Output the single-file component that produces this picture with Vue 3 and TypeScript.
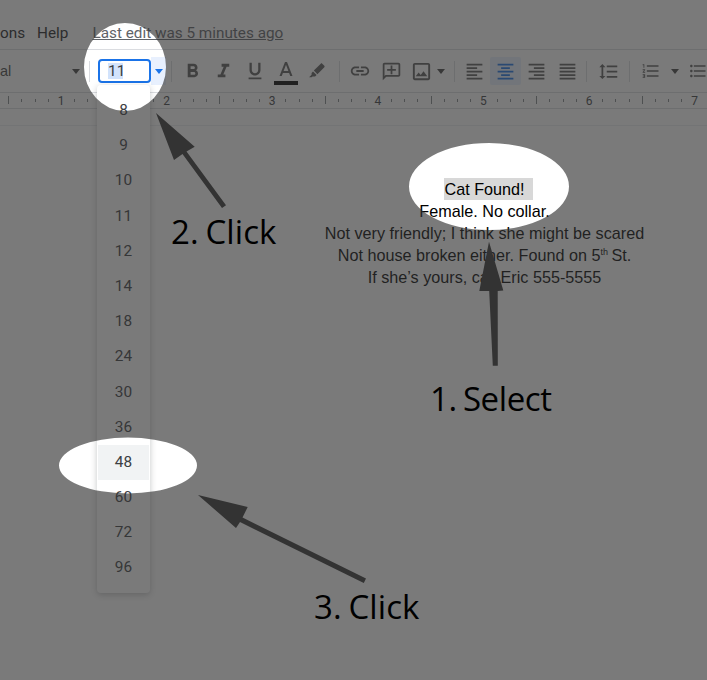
<script setup lang="ts">
import { computed } from 'vue'

interface Tool {
  d: string
  size: number
  width: number
  active?: boolean
  bar?: boolean
}

const ICONS = {
  bold: 'M15.6 10.79c.97-.67 1.65-1.77 1.65-2.79 0-2.26-1.75-4-4-4H7v14h7.04c2.09 0 3.71-1.7 3.71-3.79 0-1.52-.86-2.82-2.15-3.42zM10 6.5h3c.83 0 1.5.67 1.5 1.5s-.67 1.5-1.5 1.5h-3v-3zm3.5 9H10v-3h3.5c.83 0 1.5.67 1.5 1.5s-.67 1.5-1.5 1.5z',
  italic: 'M10 4v3h2.21l-3.42 8H6v3h8v-3h-2.21l3.42-8H18V4z',
  underline: 'M12 17c3.31 0 6-2.69 6-6V3h-2.5v8c0 1.93-1.57 3.5-3.5 3.5S8.5 12.93 8.5 11V3H6v8c0 3.31 2.69 6 6 6zm-7 2v2h14v-2H5z',
  color: 'M11 3L5.5 17h2.25l1.12-3h6.25l1.12 3h2.25L13 3h-2zm-1.38 9L12 5.67 14.38 12H9.62z',
  pen: 'M16.5 3.2c.5-.5 1.3-.5 1.8 0l2.5 2.5c.5.5.5 1.3 0 1.8l-8.3 8.3-4.3-4.3zM7.2 12.5l4.3 4.3-1.8 1.8H6.6l-1 1H2.5l3-3v-2.3z',
  link: 'M3.9 12c0-1.71 1.39-3.1 3.1-3.1h4V7H7c-2.76 0-5 2.24-5 5s2.24 5 5 5h4v-1.9H7c-1.71 0-3.1-1.39-3.1-3.1zM8 13h8v-2H8v2zm9-6h-4v1.9h4c1.71 0 3.1 1.39 3.1 3.1s-1.39 3.1-3.1 3.1h-4V17h4c2.76 0 5-2.24 5-5s-2.24-5-5-5z',
  comment: 'M20 2H4c-1.1 0-2 .9-2 2v18l4-4h14c1.1 0 2-.9 2-2V4c0-1.1-.9-2-2-2zm0 14H5.17L4 17.17V4h16v12zM13 5h-2v4H7v2h4v4h2v-4h4V9h-4z',
  image: 'M19 5v14H5V5h14m0-2H5c-1.1 0-2 .9-2 2v14c0 1.1.9 2 2 2h14c1.1 0 2-.9 2-2V5c0-1.1-.9-2-2-2zm-4.86 8.86l-3 3.87L9 13.14 6 17h12l-3.86-5.14z',
  left: 'M15 15H3v2h12v-2zm0-8H3v2h12V7zM3 13h18v-2H3v2zm0 8h18v-2H3v2zM3 3v2h18V3H3z',
  center: 'M7 15v2h10v-2H7zm-4 6h18v-2H3v2zm0-8h18v-2H3v2zm4-6v2h10V7H7zM3 3v2h18V3H3z',
  right: 'M3 21h18v-2H3v2zm6-4h12v-2H9v2zm-6-4h18v-2H3v2zm6-4h12V7H9v2zM3 3v2h18V3H3z',
  justify: 'M3 21h18v-2H3v2zm0-4h18v-2H3v2zm0-4h18v-2H3v2zm0-4h18V7H3v2zm0-6v2h18V3H3z',
  spacing: 'M6 7h2.5L5 3.5 1.5 7H4v10H1.5L5 20.5 8.5 17H6V7zm4-2v2h12V5H10zm0 14h12v-2H10v2zm0-6h12v-2H10v2z',
  numbered: 'M2 17h2v.5H3v1h1v.5H2v1h3v-4H2v1zm1-9h1V4H2v1h1v3zm-1 3h1.8L2 13.1v.9h3v-1H3.2L5 10.9V10H2v1zm5-6v2h14V5H7zm0 14h14v-2H7v2zm0-6h14v-2H7v2z',
  bullets: 'M4 10.5c-.83 0-1.5.67-1.5 1.5s.67 1.5 1.5 1.5 1.5-.67 1.5-1.5-.67-1.5-1.5-1.5zm0-6c-.83 0-1.5.67-1.5 1.5S3.17 7.5 4 7.5 5.5 6.83 5.5 6 4.83 4.5 4 4.5zm0 12c-.83 0-1.5.68-1.5 1.5s.68 1.5 1.5 1.5 1.5-.68 1.5-1.5-.67-1.5-1.5-1.5zM7 19h14v-2H7v2zm0-6h14v-2H7v2zm0-8v2h14V5H7z'
}

const formatTools: Tool[] = [
  { d: ICONS.bold, size: 23, width: 31 },
  { d: ICONS.italic, size: 23, width: 31 },
  { d: ICONS.underline, size: 22, width: 31 },
  { d: ICONS.color, size: 24, width: 31, bar: true },
  { d: ICONS.pen, size: 20, width: 31 }
]

const alignTools: Tool[] = [
  { d: ICONS.left, size: 21, width: 31 },
  { d: ICONS.center, size: 21, width: 31, active: true },
  { d: ICONS.right, size: 21, width: 31 },
  { d: ICONS.justify, size: 21, width: 31 }
]

const sizes = [8, 9, 10, 11, 12, 14, 18, 24, 30, 36, 48, 60, 72, 96]

// one inch is 105.6px on the ruler, ticks every eighth
const ticks = computed(() => {
  const out: { x: number; tall: boolean }[] = []
  for (let k = -4; k < 52; k++) {
    if (k % 8 === 0) continue
    out.push({ x: Math.round(61 + k * 13.2) + 0.5, tall: Math.abs(k % 8) === 4 })
  }
  return out
})
const inches = [1, 2, 3, 4, 5, 6, 7]

const dimPath =
  'M0 0H707V680H0Z ' +
  'M84 67a41 44 0 1 0 82 0a41 44 0 1 0 -82 0Z ' +
  'M409 186.5a80 43.5 0 1 0 160 0a80 43.5 0 1 0 -160 0Z ' +
  'M59 465.5a69 28 0 1 0 138 0a69 28 0 1 0 -138 0Z'
</script>

<template>
  <div class="page">
    <div class="menu">
      <span>ons</span>
      <span class="help">Help</span>
      <span class="last-edit">Last edit was 5 minutes ago</span>
    </div>

    <div class="toolbar">
      <span class="font-name">al</span>
      <span class="caret" />
      <span class="sep sep-font" />
      <span class="size-input"><span class="size-text">11</span></span>
      <span class="size-drop"><span class="caret caret-blue" /></span>
      <span class="sep sep-size" />

      <span v-for="t in formatTools" :key="t.d" class="tool" :style="{ width: t.width + 'px' }">
        <svg :width="t.size" :height="t.size" viewBox="0 0 24 24"><path :d="t.d" /></svg>
        <span v-if="t.bar" class="color-bar" />
      </span>

      <span class="sep sep-a" />

      <span class="tool"><svg width="22" height="22" viewBox="0 0 24 24"><path :d="ICONS.link" /></svg></span>
      <span class="tool tool-comment"><svg width="21" height="21" viewBox="0 0 24 24"><path :d="ICONS.comment" /></svg></span>
      <span class="tool tool-image">
        <svg width="23" height="23" viewBox="0 0 24 24"><path :d="ICONS.image" /></svg>
        <span class="caret" />
      </span>

      <span class="sep sep-b" />

      <span
        v-for="t in alignTools"
        :key="t.d"
        class="tool"
        :class="{ active: t.active }"
        :style="{ width: t.width + 'px' }"
      >
        <svg :width="t.size" :height="t.size" viewBox="0 0 24 24"><path :d="t.d" /></svg>
      </span>

      <span class="sep sep-c" />
      <span class="tool"><svg width="21" height="21" viewBox="0 0 24 24"><path :d="ICONS.spacing" /></svg></span>
      <span class="sep sep-d" />
      <span class="tool tool-num">
        <svg width="20" height="20" viewBox="0 0 24 24"><path :d="ICONS.numbered" /></svg>
        <span class="caret" />
      </span>
      <span class="tool tool-bullets"><svg width="20" height="20" viewBox="0 0 24 24"><path :d="ICONS.bullets" /></svg></span>
    </div>

    <div class="ruler">
      <svg width="707" height="15" viewBox="0 0 707 15">
        <line
          v-for="t in ticks"
          :key="t.x"
          :x1="t.x"
          :x2="t.x"
          :y1="t.tall ? 3 : 6"
          :y2="t.tall ? 11 : 9"
          stroke="#80868b"
        />
        <text v-for="n in inches" :key="n" :x="61 + (n - 1) * 105.6" y="11.5" text-anchor="middle">{{ n }}</text>
      </svg>
    </div>

    <div class="page-edge" />

    <div class="doc">
      <p><span class="selected">Cat Found!</span></p>
      <p>Female. No collar.</p>
      <p>Not very friendly; I think she might be scared</p>
      <p>Not house broken either. Found on 5<sup>th</sup> St.</p>
      <p>If she’s yours, call Eric 555-5555</p>
    </div>

    <ul class="sizes">
      <li v-for="s in sizes" :key="s" :class="{ hover: s === 48 }">{{ s }}</li>
    </ul>

    <svg class="overlay" width="707" height="680" viewBox="0 0 707 680">
      <path :d="dimPath" fill="#333" fill-opacity="0.65" fill-rule="evenodd" />
      <g fill="#333">
        <path d="M489 241.7L503.3 290.5L497.7 291L497.8 365.7L492.8 365.7L489.2 291L479.3 291Z" />
        <path d="M156 113L194.7 146.7L186.5 151.5L226 205.2L222 208L182.5 154L174 160Z" />
        <path d="M198 495L247.7 507L242.5 517.5L366 578.5L363.8 583L240 522L236 528Z" />
      </g>
    </svg>

    <div class="note note-select">1. Select</div>
    <div class="note note-click note-click2">2. Click</div>
    <div class="note note-click note-click3">3. Click</div>
  </div>
</template>

<style scoped>
.page {
  position: relative;
  width: 707px;
  height: 680px;
  overflow: hidden;
  background: #fff;
  font-family: Roboto, "Liberation Sans", sans-serif;
}

.menu {
  display: flex;
  align-items: center;
  height: 50px;
  padding-top: 17px;
  box-sizing: border-box;
  border-bottom: 1px solid #dadce0;
  font-size: 15.3px;
  color: #202124;
}
.help {
  margin-left: 12px;
}
.last-edit {
  margin-left: 24px;
  color: #5f6368;
  text-decoration: underline;
}

.toolbar {
  display: flex;
  align-items: center;
  height: 42px;
  border-bottom: 1px solid #dadce0;
  color: #444;
}
.toolbar > * {
  flex: none;
}
.font-name {
  width: 72px;
  font: 14.5px "Liberation Sans", sans-serif;
}
.caret {
  display: inline-block;
  flex: none;
  width: 0;
  height: 0;
  border: 4.5px solid transparent;
  border-top: 5px solid #444;
  border-bottom: 0;
}
.caret-blue {
  border-top-color: #1a73e8;
}
.sep {
  width: 1px;
  height: 21px;
  background: #dadce0;
}
.sep-font {
  margin-left: 9px;
}
.size-input {
  display: flex;
  align-items: center;
  width: 53px;
  height: 24px;
  margin-left: 8px;
  padding-left: 8px;
  box-sizing: border-box;
  border: 2px solid #1a73e8;
  border-radius: 4px;
  font-size: 15.4px;
  color: #3c4043;
}
.size-text {
  background: #d2e3fc;
  line-height: 16px;
  width: 15px;
  text-align: center;
}
.size-drop {
  display: flex;
  align-items: center;
  justify-content: center;
  width: 15px;
  height: 28px;
  background: #e8f0fe;
}
.sep-size {
  margin: 0 5px;
}
.tool {
  position: relative;
  display: flex;
  align-items: center;
  justify-content: center;
  width: 31px;
  height: 28px;
  border-radius: 2px;
}
.tool svg {
  fill: #5a5a5a;
  flex: none;
}
.color-bar {
  position: absolute;
  left: 4px;
  right: 3px;
  bottom: 0;
  height: 4px;
  background: #000;
}
.sep-a {
  margin: 0 4px 0 7px;
}
.tool-comment {
  margin-left: 1px;
}
.tool-image {
  width: 40px;
  justify-content: flex-start;
  gap: 4px;
  padding-left: 3px;
  box-sizing: border-box;
}
.sep-b {
  margin: 0 4px 0 7px;
}
.active {
  background: #e8f0fe;
}
.active svg {
  fill: #1a73e8;
}
.sep-c {
  margin: 0 6px 0 3px;
}
.sep-d {
  margin: 0 6px 0 5px;
}
.tool-num {
  width: 46px;
  justify-content: flex-start;
  gap: 10px;
  padding-left: 5px;
  box-sizing: border-box;
}

.ruler {
  height: 15px;
  border-bottom: 1px solid #dadce0;
  display: flex;
}
.ruler text {
  font: 12px Roboto, sans-serif;
  fill: #3c4043;
}
.page-edge {
  height: 16px;
  border-bottom: 1px solid #eceef0;
}

.doc {
  margin-top: 52px;
  padding-left: 262px;
  text-align: center;
  font: 16.2px/22px "Liberation Sans", Arial, sans-serif;
  color: #000;
}
.doc p {
  margin: 0;
}
.selected {
  display: inline-block;
  background: #d8d8d8;
  box-shadow: 8px 0 0 #d8d8d8;
}
sup {
  font-size: 9px;
  line-height: 0;
  margin-right: -1px;
}

.sizes {
  position: absolute;
  left: 97px;
  top: 85px;
  width: 53px;
  height: 508px;
  margin: 0;
  padding: 8px 1px 0;
  box-sizing: border-box;
  list-style: none;
  background: #fff;
  border-radius: 4px;
  box-shadow: 0 2px 6px rgba(60, 64, 67, 0.3);
  font-size: 15.4px;
  color: #3c4043;
  text-align: center;
}
.sizes li {
  height: 35.2px;
  line-height: 35.2px;
}
.sizes .hover {
  background: #f1f3f4;
}

.overlay {
  position: absolute;
  inset: 0;
}

.note {
  position: absolute;
  font: 33px/40px "Open Sans", sans-serif;
  letter-spacing: -0.4px;
  word-spacing: -2px;
  color: #000;
  white-space: nowrap;
}
.note-click {
  letter-spacing: 0.1px;
}
.note-select {
  left: 430px;
  top: 379px;
}
.note-click2 {
  left: 171px;
  top: 212px;
}
.note-click3 {
  left: 314px;
  top: 587px;
}
</style>
